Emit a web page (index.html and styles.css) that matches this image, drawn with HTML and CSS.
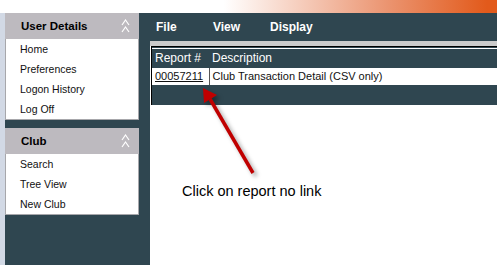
FILE: index.html
```html
<!DOCTYPE html>
<html lang="en">
<head>
  <meta charset="UTF-8">
  <meta name="viewport" content="width=device-width, initial-scale=1.0">
  <link rel="stylesheet" href="styles.css">
</head>
<body>
  <div class="topbar"></div>
  <div class="frame">
    <div class="edge"></div>
    <div class="sidebar">
      <div class="panel">
        <div class="panel-head">
          <span>User Details</span>
          <svg class="collapse" width="9" height="14" viewBox="0 0 9 14">
            <polyline points="1,6 4.5,1 8,6" />
            <polyline points="1,13 4.5,8 8,13" />
          </svg>
        </div>
        <ul class="panel-links">
          <li>Home</li>
          <li>Preferences</li>
          <li>Logon History</li>
          <li>Log Off</li>
        </ul>
      </div>
      <div class="panel">
        <div class="panel-head">
          <span>Club</span>
          <svg class="collapse" width="9" height="14" viewBox="0 0 9 14">
            <polyline points="1,6 4.5,1 8,6" />
            <polyline points="1,13 4.5,8 8,13" />
          </svg>
        </div>
        <ul class="panel-links">
          <li>Search</li>
          <li>Tree View</li>
          <li>New Club</li>
        </ul>
      </div>
    </div>
    <div class="main">
      <div class="menu">
        <span>File</span>
        <span>View</span>
        <span>Display</span>
      </div>
      <div class="rule"></div>
      <div class="reports">
        <table class="report-table">
          <tr class="head-row">
            <th class="col-num">Report #</th>
            <th>Description</th>
          </tr>
          <tr class="data-row">
            <td class="col-num"><a href="#">00057211</a></td>
            <td>Club Transaction Detail (CSV only)</td>
          </tr>
        </table>
      </div>
      <div class="note">Click on report no link</div>
      <svg class="arrow" width="80" height="100" viewBox="0 0 80 100">
        <line x1="15" y1="14" x2="58" y2="88" />
        <polygon points="8,3 9,18 22,10" />
      </svg>
    </div>
  </div>
</body>
</html>
```

FILE: styles.css
```css
* {
  box-sizing: border-box;
}

body {
  margin: 0;
  width: 497px;
  height: 265px;
  overflow: hidden;
  font-family: "Liberation Sans", Arial, sans-serif;
  background: white;
}

/* bande du haut */
.topbar {
  height: 13px;
  background: linear-gradient(90deg, #ffffff 45%, #eb9470 78%, #e25a1b 98%);
}

.frame {
  display: flex;
  height: 252px;
}

.edge {
  width: 5px;
  background: #d2d9e5;
}

/* barre latérale */
.sidebar {
  width: 145px;
  padding-right: 11px;
  background: #2f4650;
}

.panel {
  margin-bottom: 8px;
}

.panel-head {
  display: flex;
  align-items: center;
  justify-content: space-between;
  height: 26px;
  padding: 0 9px 0 16px;
  background: #bdbabf;
  font-size: 11.5px;
  font-weight: bold;
  color: #000;
}

.collapse {
  fill: none;
  stroke: white;
  stroke-width: 1.2;
}

.panel-links {
  list-style: none;
  margin: 0;
  padding: 0;
  background: white;
  border: 1px solid #a7a7ab;
  border-top: none;
}

.panel-links li {
  height: 20px;
  line-height: 20px;
  padding-left: 14px;
  font-size: 10.5px;
  color: #111;
}

/* zone principale */
.main {
  position: relative;
  flex: 1;
  background: white;
}

.menu {
  display: flex;
  height: 28px;
  align-items: center;
  padding-left: 7px;
  margin-left: -1px;
  background: #2f4650;
}

.menu span {
  width: 57px;
  font-size: 12px;
  font-weight: bold;
  color: white;
}

.rule {
  height: 5px;
  background: #cbcbcb;
}

.reports {
  height: 59px;
  margin-left: 1px;
  background: #2f4650;
  border-top: 1px solid #000;
  border-left: 1px solid #000;
  padding-top: 1px;
}

.report-table {
  width: 100%;
  border-collapse: collapse;
  border-top: 1px solid white;
}

.head-row th {
  height: 19px;
  padding: 0 0 0 3px;
  text-align: left;
  font-size: 12px;
  font-weight: normal;
  color: white;
}

.head-row th.col-num {
  width: 57px;
}

.data-row td {
  height: 17px;
  padding: 0 0 0 3px;
  background: white;
  font-size: 11px;
  color: #111;
}

.data-row td.col-num {
  border-right: 1px solid #555;
}

.data-row a {
  color: #111;
}

/* annotation */
.note {
  padding: 78px 0 0 32px;
  font-size: 14.5px;
  color: #000;
}

.arrow {
  position: absolute;
  left: 45px;
  top: 72px;
  overflow: visible;
  filter: drop-shadow(3px 3px 2px rgba(0,0,0,0.35));
}

.arrow line {
  stroke: #c00000;
  stroke-width: 3.5;
}

.arrow polygon {
  fill: #c00000;
}
```
